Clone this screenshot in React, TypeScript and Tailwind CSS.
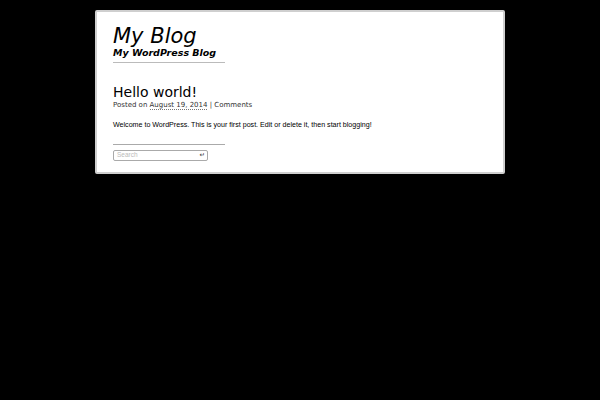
export default function App() {
  return (
    <div className="min-h-[400px] w-[600px] bg-black pt-[10px]">
      <div className="ml-[95px] w-[410px] rounded-[2px] border-2 border-[#cfcfcf] bg-white px-[16px] pb-[11px] pt-[13px] font-['DejaVu_Sans',sans-serif] text-black">
        <header className="w-[112px] border-b border-[#bbbbbb] pb-[4px]">
          <h1 className="whitespace-nowrap text-[21px] italic leading-[23px]">My Blog</h1>
          <p className="whitespace-nowrap text-[9.5px] font-bold italic leading-[10px]">
            My WordPress Blog
          </p>
        </header>

        <article className="mt-[21px]">
          <h2 className="text-[14px] leading-[16px]">Hello world!</h2>
          <p className="mt-[1px] text-[7px] leading-[9px] text-[#333]">
            Posted on{" "}
            <span className="border-b border-dotted border-[#777]">August 19, 2014</span> |
            Comments
          </p>
          <p className="mt-[11px] font-['Liberation_Sans',Arial,sans-serif] text-[7.1px] leading-[9px] text-black">
            Welcome to WordPress. This is your first post. Edit or delete it, then start blogging!
          </p>
        </article>

        <div className="mt-[14px] w-[112px] border-t border-[#aaaaaa] pt-[5px]">
          <div className="flex h-[11px] w-[95px] items-center justify-between rounded-[2px] border border-[#aaaaaa] pl-[3px] pr-[2px]">
            <span className="font-['Liberation_Sans',Arial,sans-serif] text-[6.5px] leading-none text-[#bbb]">
              Search
            </span>
            <span className="text-[6.5px] leading-none text-[#333]">↵</span>
          </div>
        </div>
      </div>
    </div>
  );
}
